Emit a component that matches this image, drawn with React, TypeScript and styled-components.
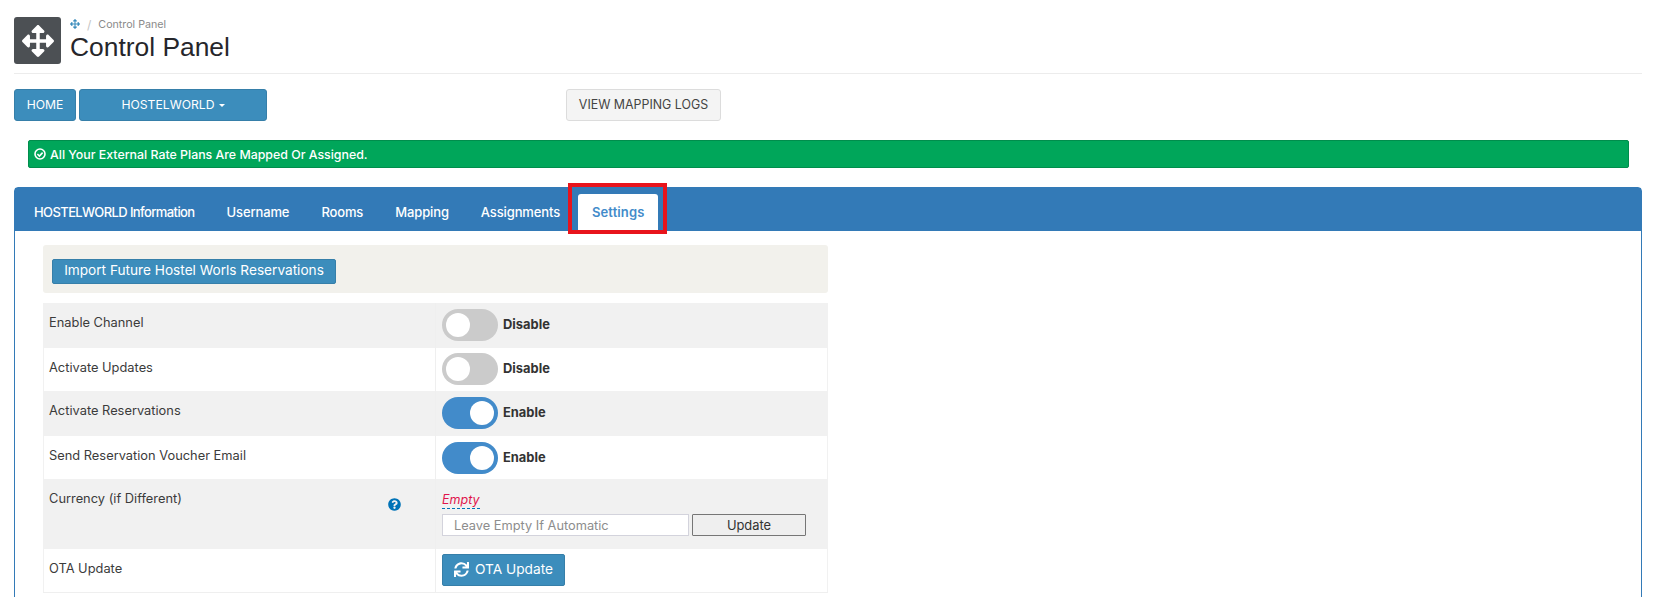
import React from "react"
import styled, { createGlobalStyle } from "styled-components"
import { FaArrowsAlt, FaQuestionCircle, FaSync } from "react-icons/fa"

const GlobalStyle = createGlobalStyle`
  html, body {
    margin: 0;
    overflow: hidden;
    background: #fff;
  }
  body {
    font-family: Inter, "Open Sans", sans-serif;
    color: #3b3b3b;
  }
`

const Page = styled.div`
  padding: 17px 11px 0 14px;
`

const Header = styled.header`
  display: flex;
  gap: 9px;
  height: 56px;
  border-bottom: 1px solid #ececec;
`

const HeaderIcon = styled.div`
  width: 47px;
  height: 47px;
  border-radius: 3px;
  background: #4c5054;
  color: #fff;
  display: flex;
  align-items: center;
  justify-content: center;
  font-size: 32px;
`

const Crumbs = styled.div`
  display: flex;
  align-items: center;
  gap: 7px;
  height: 14px;
  font-size: 10.7px;
  color: #8a8a8a;
  svg {
    color: #3c8dbc;
    font-size: 10px;
  }
`

const Slash = styled.span`
  color: #c4c4c4;
  font-size: 12px;
`

const Title = styled.h1`
  margin: 1px 0 0;
  font: 400 26.4px/30px "Liberation Sans", Arial, sans-serif;
  color: #26262b;
`

const ActionBar = styled.div`
  display: flex;
  margin-top: 15px;
  height: 32px;
`

const NavButton = styled.button<{ $width: number; $gap?: number }>`
  width: ${p => p.$width}px;
  margin-right: ${p => p.$gap ?? 3}px;
  height: 32px;
  padding: 0 0 2px;
  background: #3c8dbc;
  border: 1px solid #367fa9;
  border-radius: 3px;
  color: #fff;
  font: 400 12.2px Inter, sans-serif;
`

const Caret = styled.span`
  display: inline-block;
  margin-left: 4px;
  vertical-align: middle;
  border-top: 3px solid #fff;
  border-left: 3px solid transparent;
  border-right: 3px solid transparent;
`

const LogsButton = styled.button`
  width: 155px;
  height: 32px;
  padding: 0 0 2px;
  background: #f4f4f4;
  border: 1px solid #dcdcdc;
  border-radius: 3px;
  color: #444;
  font: 400 12.4px Inter, sans-serif;
`

const Alert = styled.div`
  display: flex;
  align-items: center;
  gap: 4px;
  height: 28px;
  box-sizing: border-box;
  margin: 19px 13px 0 14px;
  padding: 0 5px;
  background: #00a65a;
  border: 1px solid #008d4c;
  border-radius: 2px;
  color: #fff;
  font-size: 12.36px;
  font-weight: 500;
`

const Panel = styled.section`
  margin-top: 19px;
  height: 480px;
  border: 1px solid #337ab7;
  border-radius: 4px 4px 0 0;
`

const TabBar = styled.nav`
  display: flex;
  align-items: flex-end;
  height: 43px;
  padding-left: 5px;
  background: #337ab7;
`

const Tab = styled.div<{ $active?: boolean; $spacing?: number }>`
  position: relative;
  height: 37px;
  box-sizing: border-box;
  padding: 0 14px 2px;
  margin-right: 4px;
  display: flex;
  align-items: center;
  font-size: 13px;
  letter-spacing: ${p => p.$spacing ?? -0.13}px;
  font-weight: ${p => (p.$active ? 600 : 500)};
  color: ${p => (p.$active ? "#428bca" : "#fff")};
  background: ${p => (p.$active ? "#fff" : "transparent")};
  border-radius: 3px 3px 0 0;
`

const Highlight = styled.span`
  position: absolute;
  inset: -11px -9px -3px -10px;
  border: 4px solid #e8141c;
`

const PanelBody = styled.div`
  width: 785px;
  margin: 14px 0 0 28px;
`

const Well = styled.div`
  height: 48px;
  box-sizing: border-box;
  padding: 14px 9px 0;
  background: #f2f1ec;
  border-radius: 3px;
`

const ImportButton = styled.button`
  width: 284px;
  height: 25px;
  padding: 0 0 3px;
  background: #3c8dbc;
  border: 1px solid #367fa9;
  border-radius: 2px;
  color: #fff;
  font: 400 13.65px Inter, sans-serif;
`

const Settings = styled.div`
  margin-top: 10px;
  border-bottom: 1px solid #efefef;
`

const Row = styled.div<{ $height: number; $shaded?: boolean }>`
  display: grid;
  grid-template-columns: 393px 1fr;
  height: ${p => p.$height}px;
  background: ${p => (p.$shaded ? "#f1f1f1" : "#fff")};
  box-shadow: inset 1px 0 0 #f1f1f1, inset -1px 0 0 #f1f1f1;
`

const LabelCell = styled.div`
  position: relative;
  padding: 12px 6px 0;
  font-size: 12.85px;
  line-height: 16px;
  border-right: 1px solid #efefef;
`

const HelpIcon = styled(FaQuestionCircle)`
  position: absolute;
  top: 19px;
  right: 34px;
  font-size: 13px;
  color: #0073b7;
`

const ValueCell = styled.div<{ $top?: number }>`
  padding: ${p => p.$top ?? 5}px 6px 0;
`

const ToggleLine = styled.div`
  display: flex;
  align-items: center;
  gap: 5px;
  font-size: 12.9px;
  font-weight: 700;
  color: #333;
`

const ToggleText = styled.span`
  padding-bottom: 2px;
`

const Track = styled.span<{ $on?: boolean }>`
  display: flex;
  justify-content: ${p => (p.$on ? "flex-end" : "flex-start")};
  align-items: center;
  width: 56px;
  height: 32px;
  box-sizing: border-box;
  padding: 4px;
  border-radius: 16px;
  background: ${p => (p.$on ? "#428bca" : "#cbcbcb")};
`

const Knob = styled.span`
  width: 24px;
  height: 24px;
  border-radius: 50%;
  background: #fff;
`

const EmptyLink = styled.span`
  display: inline-block;
  margin-top: 8px;
  font-size: 12.5px;
  font-style: italic;
  line-height: 16px;
  color: #e0144c;
  border-bottom: 1px dashed #0073b7;
`

const CurrencyForm = styled.div`
  display: flex;
  gap: 3px;
  margin-top: 5px;
`

const CurrencyInput = styled.input`
  width: 247px;
  height: 22px;
  box-sizing: border-box;
  padding: 0 11px;
  background: #fff;
  border: 1px solid #d3d3dc;
  font: 400 12.8px Inter, sans-serif;
  &::placeholder {
    color: #8d8d8d;
  }
`

const UpdateButton = styled.button`
  width: 114px;
  height: 22px;
  padding: 0;
  background: #efefef;
  border: 1px solid #767676;
  border-radius: 1px;
  color: #333;
  font: 400 12.9px Inter, sans-serif;
`

const OtaButton = styled.button`
  display: flex;
  align-items: center;
  justify-content: center;
  gap: 6px;
  width: 123px;
  height: 32px;
  padding: 0 0 2px;
  background: #3c8dbc;
  border: 1px solid #367fa9;
  border-radius: 2px;
  color: #fff;
  font: 400 13.7px Inter, sans-serif;
  svg {
    font-size: 15px;
  }
`

const tabs = ["Username", "Rooms", "Mapping", "Assignments"]

const toggles = [
  { label: "Enable Channel", on: false, height: 45, top: 6, shaded: true },
  { label: "Activate Updates", on: false, height: 43, top: 5, shaded: false },
  { label: "Activate Reservations", on: true, height: 45, top: 6, shaded: true },
  { label: "Send Reservation Voucher Email", on: true, height: 43, top: 6, shaded: false },
]

// font-awesome 4 check-circle-o has a heavier ring than the FA5 one in react-icons
const CheckCircle = () => (
  <svg width="12" height="12" viewBox="0 0 12 12" fill="none" stroke="#fff" strokeWidth="1.6">
    <circle cx="6" cy="6" r="5" />
    <path d="M3.4 6l2 2 3.2-3.4" />
  </svg>
)

export default function App() {
  return (
    <Page>
      <GlobalStyle />
      <Header>
        <HeaderIcon><FaArrowsAlt /></HeaderIcon>
        <div>
          <Crumbs><FaArrowsAlt /><Slash>/</Slash>Control Panel</Crumbs>
          <Title>Control Panel</Title>
        </div>
      </Header>
      <ActionBar>
        <NavButton $width={62}>HOME</NavButton>
        <NavButton $width={188} $gap={299}>HOSTELWORLD<Caret /></NavButton>
        <LogsButton>VIEW MAPPING LOGS</LogsButton>
      </ActionBar>
      <Alert><CheckCircle />All Your External Rate Plans Are Mapped Or Assigned.</Alert>
      <Panel>
        <TabBar>
          <Tab $spacing={-0.6}>HOSTELWORLD Information</Tab>
          {tabs.map(t => <Tab key={t}>{t}</Tab>)}
          <Tab $active $spacing={0.1}>Settings<Highlight /></Tab>
        </TabBar>
        <PanelBody>
          <Well><ImportButton>Import Future Hostel Worls Reservations</ImportButton></Well>
          <Settings>
            {toggles.map(t => (
              <Row key={t.label} $height={t.height} $shaded={t.shaded}>
                <LabelCell>{t.label}</LabelCell>
                <ValueCell $top={t.top}>
                  <ToggleLine>
                    <Track $on={t.on}><Knob /></Track>
                    <ToggleText>{t.on ? "Enable" : "Disable"}</ToggleText>
                  </ToggleLine>
                </ValueCell>
              </Row>
            ))}
            <Row $height={70} $shaded>
              <LabelCell>Currency (if Different)<HelpIcon /></LabelCell>
              <ValueCell>
                <EmptyLink>Empty</EmptyLink>
                <CurrencyForm>
                  <CurrencyInput placeholder="Leave Empty If Automatic" />
                  <UpdateButton>Update</UpdateButton>
                </CurrencyForm>
              </ValueCell>
            </Row>
            <Row $height={43}>
              <LabelCell>OTA Update</LabelCell>
              <ValueCell><OtaButton><FaSync />OTA Update</OtaButton></ValueCell>
            </Row>
          </Settings>
        </PanelBody>
      </Panel>
    </Page>
  )
}
